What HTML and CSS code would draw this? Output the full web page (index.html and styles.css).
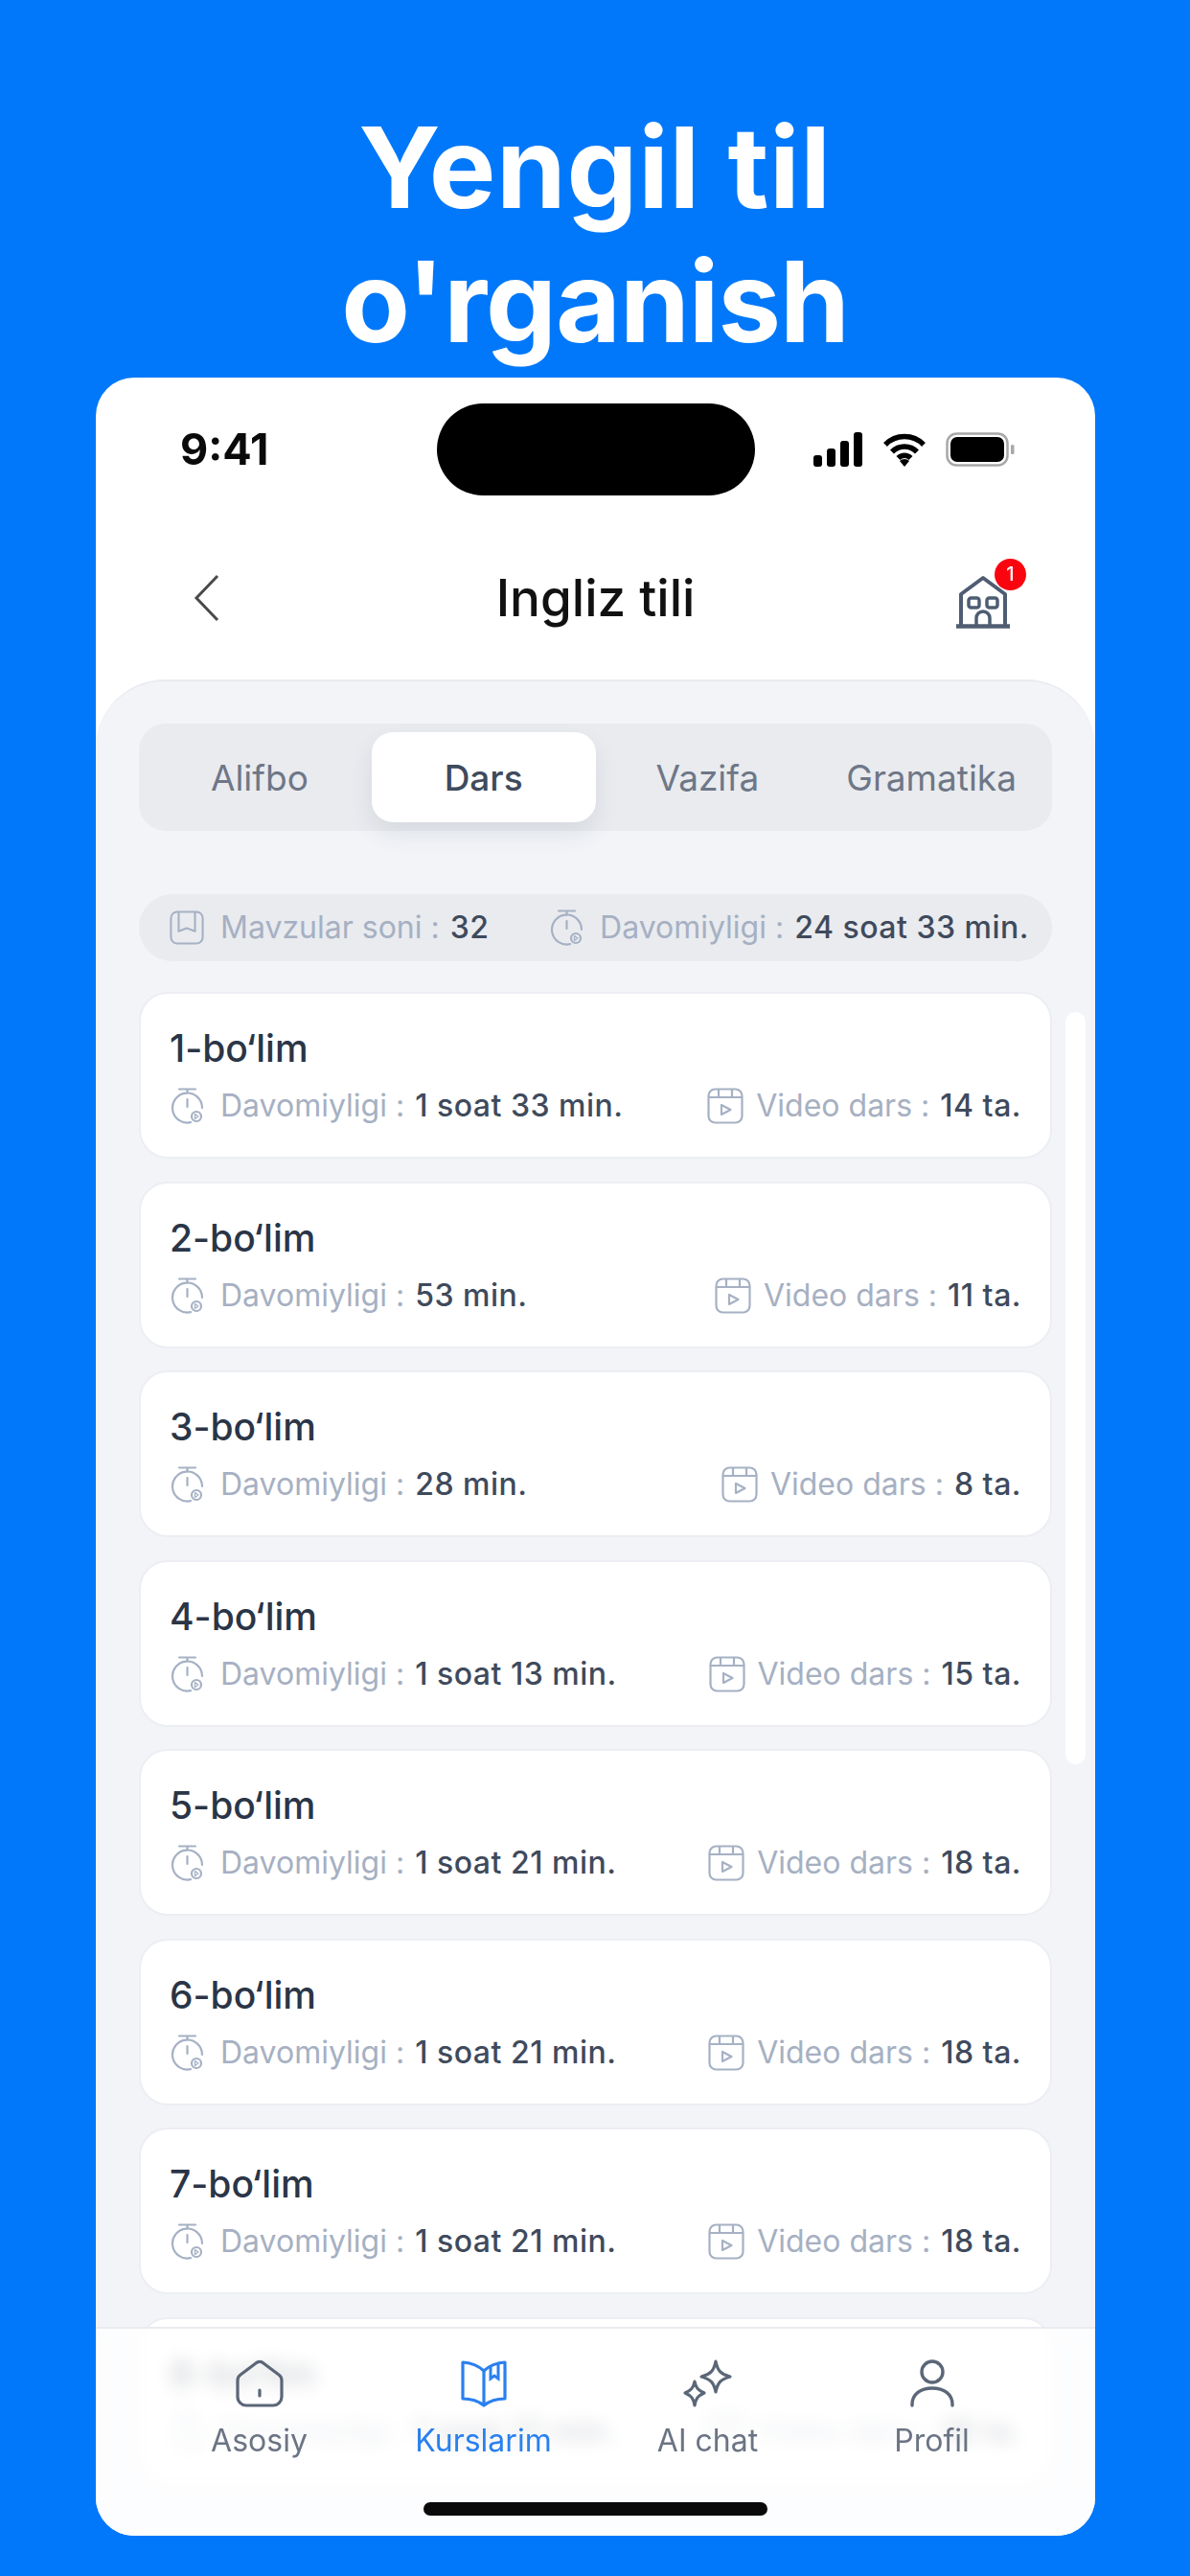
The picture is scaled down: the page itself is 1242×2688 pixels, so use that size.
FILE: index.html
```html
<!DOCTYPE html>
<html lang="uz">
<head>
<meta charset="utf-8">
<title>Yengil til o'rganish</title>
<link rel="stylesheet" href="styles.css">
</head>
<body>
<svg class="defs" width="0" height="0" aria-hidden="true">
  <symbol id="i-clock" viewBox="-2 0 36 38">
    <path d="M8 1.500h17M16.500 1.500v4M16.500 12v8" fill="none" stroke-width="2.200" stroke-linecap="round"/>
    <path d="M20 36.100A15.500 15.500 0 1 1 32 21" fill="none" stroke-width="2.200" stroke-linecap="round"/>
    <circle cx="26" cy="30" r="5" fill="none" stroke-width="2.200"/>
    <path d="M24.500 27.500v5l3.400-2.500z" fill="none" stroke-width="1.300" stroke-linejoin="round"/>
  </symbol>
  <symbol id="i-video" viewBox="0 0 38 38">
    <rect x="1.500" y="1.500" width="35" height="35" rx="7" fill="none" stroke-width="2.200"/>
    <path d="M2 10h34M12 2v8M26 2v8" fill="none" stroke-width="2.200"/>
    <path d="M15 18v10l9.500-5z" fill="none" stroke-width="2.200" stroke-linejoin="round"/>
  </symbol>
  <symbol id="i-book" viewBox="0 0 38 38">
    <rect x="1.500" y="1.500" width="35" height="35" rx="7" fill="none" stroke-width="2.200"/>
    <path d="M10 2v21l9-3.500 9 3.500V2" fill="none" stroke-width="2.200" stroke-linejoin="round"/>
  </symbol>
</svg>
<main class="screen">
  <h1 class="headline"><span class="line-a">Yengil til</span><span class="line-b">o'rganish</span></h1>
  <section class="phone">
    <div class="status">
      <span class="time">9:41</span>
      <span class="island"></span>
      <div class="status-icons">
        <svg class="sig" viewBox="0 0 52 36"><rect x="0" y="24" width="9" height="12" rx="3"/><rect x="14" y="17" width="9" height="19" rx="3"/><rect x="28" y="9" width="9" height="27" rx="3"/><rect x="42" y="0" width="9" height="36" rx="3"/></svg>
        <svg class="wifi" viewBox="0 0 46 36"><path d="M3 13a28 28 0 0 1 40 0M10 20.500a18 18 0 0 1 26 0M16.500 27a9 9 0 0 1 13 0" fill="none" stroke="#000" stroke-width="5.500"/><path d="M23 36l-5-6a7 7 0 0 1 10 0z"/></svg>
        <svg class="batt" viewBox="0 0 72 36"><rect x="1.500" y="1.500" width="63" height="33" rx="10" fill="none" stroke="#a8a8a8" stroke-width="2.500"/><rect x="5" y="5" width="56" height="26" rx="7"/><rect x="68" y="13" width="3.500" height="10" rx="1.500" fill="#a8a8a8"/></svg>
      </div>
    </div>
    <header class="topbar">
      <svg class="back" viewBox="0 0 28 50"><path d="M25 2L3 25l22 23" fill="none" stroke="#4a4a4a" stroke-width="3"/></svg>
      <span class="page-title">Ingliz tili</span>
      <div class="house-wrap">
        <svg class="house" viewBox="0 0 58 56"><path d="M6 54V20L29 3l23 17v34" fill="none" stroke="#4f5d73" stroke-width="4" stroke-linejoin="round"/><path d="M1 53.500h56" stroke="#4f5d73" stroke-width="4.500" fill="none"/><rect x="14" y="24" width="11" height="10" rx="2.500" fill="none" stroke="#4f5d73" stroke-width="3.500"/><rect x="33" y="24" width="11" height="10" rx="2.500" fill="none" stroke="#4f5d73" stroke-width="3.500"/><path d="M22 53V45a7 7 0 0 1 14 0v8" fill="none" stroke="#4f5d73" stroke-width="3.500"/></svg>
        <span class="badge">1</span>
      </div>
    </header>
    <div class="panel">
      <nav class="tabs">
        <span class="tab">Alifbo</span>
        <span class="tab tab-active">Dars</span>
        <span class="tab">Vazifa</span>
        <span class="tab">Gramatika</span>
      </nav>
      <div class="stats">
        <span class="meta"><svg class="ic"><use href="#i-book"/></svg><span class="lbl">Mavzular soni :</span><b class="val">32</b></span>
        <span class="meta"><svg class="ic"><use href="#i-clock"/></svg><span class="lbl">Davomiyligi :</span><b class="val">24 soat 33 min.</b></span>
      </div>
      <div class="list">
        <article class="card"><h2 class="card-title">1-bo‘lim</h2><div class="row"><span class="meta"><svg class="ic"><use href="#i-clock"/></svg><span class="lbl">Davomiyligi :</span><b class="val">1 soat 33 min.</b></span><span class="meta"><svg class="ic ic-video"><use href="#i-video"/></svg><span class="lbl">Video dars :</span><b class="val">14 ta.</b></span></div></article>
        <article class="card"><h2 class="card-title">2-bo‘lim</h2><div class="row"><span class="meta"><svg class="ic"><use href="#i-clock"/></svg><span class="lbl">Davomiyligi :</span><b class="val">53 min.</b></span><span class="meta"><svg class="ic ic-video"><use href="#i-video"/></svg><span class="lbl">Video dars :</span><b class="val">11 ta.</b></span></div></article>
        <article class="card"><h2 class="card-title">3-bo‘lim</h2><div class="row"><span class="meta"><svg class="ic"><use href="#i-clock"/></svg><span class="lbl">Davomiyligi :</span><b class="val">28 min.</b></span><span class="meta"><svg class="ic ic-video"><use href="#i-video"/></svg><span class="lbl">Video dars :</span><b class="val">8 ta.</b></span></div></article>
        <article class="card"><h2 class="card-title">4-bo‘lim</h2><div class="row"><span class="meta"><svg class="ic"><use href="#i-clock"/></svg><span class="lbl">Davomiyligi :</span><b class="val">1 soat 13 min.</b></span><span class="meta"><svg class="ic ic-video"><use href="#i-video"/></svg><span class="lbl">Video dars :</span><b class="val">15 ta.</b></span></div></article>
        <article class="card"><h2 class="card-title">5-bo‘lim</h2><div class="row"><span class="meta"><svg class="ic"><use href="#i-clock"/></svg><span class="lbl">Davomiyligi :</span><b class="val">1 soat 21 min.</b></span><span class="meta"><svg class="ic ic-video"><use href="#i-video"/></svg><span class="lbl">Video dars :</span><b class="val">18 ta.</b></span></div></article>
        <article class="card"><h2 class="card-title">6-bo‘lim</h2><div class="row"><span class="meta"><svg class="ic"><use href="#i-clock"/></svg><span class="lbl">Davomiyligi :</span><b class="val">1 soat 21 min.</b></span><span class="meta"><svg class="ic ic-video"><use href="#i-video"/></svg><span class="lbl">Video dars :</span><b class="val">18 ta.</b></span></div></article>
        <article class="card"><h2 class="card-title">7-bo‘lim</h2><div class="row"><span class="meta"><svg class="ic"><use href="#i-clock"/></svg><span class="lbl">Davomiyligi :</span><b class="val">1 soat 21 min.</b></span><span class="meta"><svg class="ic ic-video"><use href="#i-video"/></svg><span class="lbl">Video dars :</span><b class="val">18 ta.</b></span></div></article>
        <article class="card"><h2 class="card-title">8-bo‘lim</h2><div class="row"><span class="meta"><svg class="ic"><use href="#i-clock"/></svg><span class="lbl">Davomiyligi :</span><b class="val">1 soat 21 min.</b></span><span class="meta"><svg class="ic ic-video"><use href="#i-video"/></svg><span class="lbl">Video dars :</span><b class="val">18 ta.</b></span></div></article>
      </div>
      <span class="scrollbar"></span>
    </div>
    <footer class="nav">
      <div class="nav-items">
        <a class="nav-item">
          <svg class="nav-ic" viewBox="0 0 54 50"><path d="M23 4a6 6 0 0 1 8 0L47 16a7 7 0 0 1 3 6V39a9 9 0 0 1-9 9H13a9 9 0 0 1-9-9V22a7 7 0 0 1 3-6z" fill="none" stroke="#5b6778" stroke-width="3.200" stroke-linejoin="round"/><path d="M27 32v6" stroke="#5b6778" stroke-width="3.200" stroke-linecap="round"/></svg>
          <span>Asosiy</span>
        </a>
        <a class="nav-item nav-active">
          <svg class="nav-ic" viewBox="0 0 54 50"><path d="M27 12C22 7 13 3 5 3v38c8 0 17 3 22 7 5-4 14-7 22-7V3c-8 0-17 4-22 9zM27 12v36" fill="none" stroke="#2a80ef" stroke-width="3.200" stroke-linejoin="round"/><path d="M34 6v14l4-3 4 3V3.500" fill="none" stroke="#2a80ef" stroke-width="3"/></svg>
          <span>Kurslarim</span>
        </a>
        <a class="nav-item">
          <svg class="nav-ic" viewBox="0 0 54 50"><path d="M35 2c2 10 5 13 15 16-10 3-13 6-15 16-2-10-5-13-15-16 10-3 13-6 15-16zM13 23c1.500 7 3.500 9 10 12-6.500 3-8.500 5-10 13-1.500-8-3.500-10-10-13 6.500-3 8.500-5 10-12z" fill="none" stroke="#5b6778" stroke-width="3.200" stroke-linejoin="round"/></svg>
          <span>AI chat</span>
        </a>
        <a class="nav-item">
          <svg class="nav-ic" viewBox="0 0 54 50"><circle cx="27" cy="13" r="11" fill="none" stroke="#5b6778" stroke-width="3.400"/><path d="M6 48v-1c0-11 9-17 21-17s21 6 21 17v1" fill="none" stroke="#5b6778" stroke-width="3.400" stroke-linecap="round"/></svg>
          <span>Profil</span>
        </a>
      </div>
      <span class="home-bar"></span>
    </footer>
  </section>
</main>
</body>
</html>
```

FILE: styles.css
```css
* { box-sizing: border-box; }
html, body { margin: 0; padding: 0; }
body { width: 1242px; height: 2688px; background: #0178fa; font-family: Inter, "Noto Sans", sans-serif; overflow: hidden; }
.defs { position: absolute; }
.screen { display: flex; flex-direction: column; align-items: center; padding-top: 105px; }
.headline { margin: 0 0 9px; font-size: 117px; line-height: 140px; font-weight: 700; color: #fff; text-align: center; }
.line-a, .line-b { display: block; }
.line-a { letter-spacing: .7px; }
.line-b { letter-spacing: -1px; }

.phone { position: relative; width: 1043px; height: 2252px; margin-left: 1px; background: #fff; border-radius: 40px; overflow: hidden; filter: blur(.6px); }

.status { display: grid; grid-template-columns: 1fr 332px 1fr; align-items: center; padding-top: 27px; }
.time { padding-left: 88px; font-size: 45px; font-weight: 700; color: #0a0a0a; line-height: 96px; }
.island { height: 96px; background: #000; border-radius: 48px; }
.status-icons { display: flex; justify-content: flex-end; align-items: center; gap: 20px; padding-right: 84px; }
.sig { width: 52px; height: 36px; }
.wifi { width: 46px; height: 36px; }
.batt { width: 72px; height: 36px; }

.topbar { display: grid; grid-template-columns: 1fr auto 1fr; align-items: center; height: 192px; padding: 22px 88px 0 88px; }
.back { width: 28px; height: 50px; margin-left: 14px; }
.page-title { font-size: 53px; font-weight: 500; color: #111; line-height: 60px; }
.house-wrap { position: relative; justify-self: end; width: 58px; height: 56px; margin-top: 8px; }
.house { width: 58px; height: 56px; display: block; }
.badge { position: absolute; top: -17px; right: -16px; width: 33px; height: 33px; border-radius: 50%; background: #fa0410; color: #fff; font-size: 20px; font-weight: 500; line-height: 33px; text-align: center; }

.panel { position: relative; height: 1938px; padding: 44px 45px 0; background: #f2f4f8; border-top: 2px solid #e9ebf0; border-radius: 72px 72px 0 0; }

.tabs { display: grid; grid-template-columns: repeat(4, 1fr); align-items: stretch; height: 112px; padding: 9px; background: #e9ebef; border-radius: 28px; }
.tab { display: flex; align-items: center; justify-content: center; font-size: 37px; font-weight: 400; color: #6e7787; white-space: nowrap; }
.tab-active { background: #fff; border-radius: 22px; color: #3f4a5c; font-weight: 500; box-shadow: 0 12px 24px rgba(60, 70, 90, .10); }

.stats { display: flex; justify-content: space-between; align-items: center; height: 70px; margin-top: 66px; padding: 0 24px 0 32px; background: #e9ebef; border-radius: 35px; }

.meta { display: inline-flex; align-items: center; font-size: 32px; line-height: 40px; white-space: nowrap; }
.ic { width: 36px; height: 38px; margin-right: 17px; stroke: #a6b1c4; fill: #a6b1c4; }
.ic-video { width: 38px; margin-right: 13px; }
.lbl { color: #a6b0c2; }
.val { margin-left: 11px; color: #3f4a5c; font-weight: 500; letter-spacing: .5px; }

.list { display: flex; flex-direction: column; gap: 23.500px; margin-top: 32px; }
.card { height: 174px; padding: 34px 30px 0; background: #fff; border: 2px solid #eceef3; border-radius: 30px; }
.card-title { margin: 0 0 15px; font-size: 39px; line-height: 46px; font-weight: 500; color: #2a3547; }
.row { display: flex; justify-content: space-between; align-items: center; height: 44px; }

.scrollbar { position: absolute; top: 345px; right: 10px; width: 21px; height: 785px; background: #fff; border-radius: 11px; }

.nav { position: absolute; left: 0; right: 0; bottom: 0; height: 218px; padding-top: 32px; background: rgba(255, 255, 255, .78); border-top: 2px solid #e9ebf0; backdrop-filter: blur(9px); }
.nav-items { display: grid; grid-template-columns: repeat(4, 234px); justify-content: center; }
.nav-item { display: flex; flex-direction: column; align-items: center; font-size: 32px; line-height: 40px; color: #6b7484; }
.nav-active { color: #2a80ef; }
.nav-ic { width: 54px; height: 50px; margin-bottom: 15px; }
.home-bar { position: absolute; left: 342px; bottom: 21px; width: 359px; height: 14px; background: #0a0a0a; border-radius: 7px; }
```
